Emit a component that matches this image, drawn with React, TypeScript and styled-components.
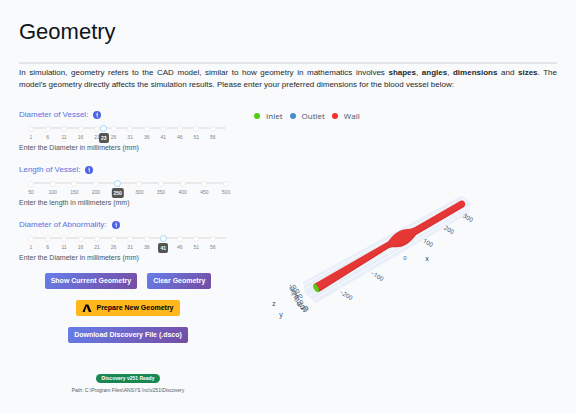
import React, { useState } from "react";
import styled, { createGlobalStyle } from "styled-components";

const GlobalStyle = createGlobalStyle`
  * { box-sizing: border-box; }
  body {
    margin: 0;
    background: #f8fafc;
    color: #212529;
    font-family: "Liberation Sans", Arial, sans-serif;
    font-size: 8px;
  }
`;

const Page = styled.main`
  padding: 18px 19px;
`;

const Title = styled.h1`
  margin: 0 0 16px;
  font-size: 22px;
  line-height: 28px;
  font-weight: 400;
  color: #111418;
`;

const Divider = styled.hr`
  height: 2px;
  margin: 0 0 3px;
  border: 0;
  background: #e1e4e8;
`;

const Intro = styled.p`
  margin: 0 0 18px;
  line-height: 12px;
  text-align: justify;
  color: #24292e;
`;

const Columns = styled.div`
  display: grid;
  grid-template-columns: minmax(218px, 2fr) 3fr;
`;

const Fields = styled.div`
  display: flex;
  flex-direction: column;
  gap: 11px;
`;

const Field = styled.div`
  display: flex;
  flex-direction: column;
`;

const LabelRow = styled.div`
  display: flex;
  align-items: center;
  gap: 5px;
  height: 12px;
`;

const FieldLabel = styled.label`
  line-height: 12px;
  color: #5b6fe3;
`;

const InfoIcon = styled.svg`
  width: 8px;
  height: 8px;
`;

const SliderBox = styled.div`
  position: relative;
  height: 22px;
  margin: 0 11px 0 12px;
`;

const Rail = styled.div`
  position: absolute;
  top: 6px;
  left: 0;
  right: 0;
  height: 2px;
  border-radius: 1px;
  background: #e9e9e9;
`;

const Mark = styled.div`
  position: absolute;
  top: 5px;
  display: flex;
  flex-direction: column;
  align-items: center;
  gap: 1px;
  width: 20px;
  margin-left: -10px;
  font-size: 5px;
  line-height: 8px;
  color: #808489;
  &::before {
    content: "";
    width: 4px;
    height: 4px;
    border: 1px solid #eeeeee;
    border-radius: 50%;
    background: #ffffff;
  }
`;

const Range = styled.input`
  position: absolute;
  top: 3px;
  left: -4px;
  width: calc(100% + 8px);
  height: 8px;
  margin: 0;
  appearance: none;
  background: transparent;
  cursor: pointer;
  &::-webkit-slider-thumb {
    appearance: none;
    width: 7px;
    height: 7px;
    border: 1px solid #a3d7fa;
    border-radius: 50%;
    background: #ffffff;
  }
`;

const Bubble = styled.output`
  position: absolute;
  top: 12px;
  min-width: 10px;
  padding: 0 2px;
  border-radius: 2px;
  transform: translateX(-50%);
  background: #555555;
  color: #ffffff;
  font-size: 5px;
  font-weight: 700;
  line-height: 10px;
  text-align: center;
`;

const Help = styled.div`
  font-size: 7px;
  line-height: 10px;
  color: #50555a;
`;

const Actions = styled.div`
  display: flex;
  flex-direction: column;
  align-items: center;
  gap: 11px;
  margin-top: 10px;
`;

const ActionRow = styled.div`
  display: flex;
  gap: 10px;
`;

const Button = styled.button<{ $tone?: "amber" }>`
  display: inline-flex;
  align-items: center;
  gap: 4px;
  height: 16px;
  padding: 0 6px;
  border: 0;
  border-radius: 2px;
  background: ${(p) => (p.$tone === "amber" ? "#ffb71b" : "linear-gradient(135deg, #667eea 0%, #764ba2 100%)")};
  color: ${(p) => (p.$tone === "amber" ? "#000000" : "#ffffff")};
  font: 700 7px/16px "Liberation Sans", Arial, sans-serif;
  white-space: nowrap;
  cursor: pointer;
`;

const LogoIcon = styled.svg`
  width: 10px;
  height: 8px;
`;

const Status = styled.div`
  display: flex;
  flex-direction: column;
  align-items: center;
  gap: 3px;
  margin-top: 31px;
`;

const Badge = styled.span`
  padding: 0 6px;
  border-radius: 5px;
  background: #198754;
  color: #ffffff;
  font-size: 5px;
  font-weight: 700;
  line-height: 9px;
`;

const Path = styled.div`
  font-size: 5px;
  line-height: 8px;
  color: #555a5f;
`;

const Viewer = styled.section`
  display: flex;
  flex-direction: column;
`;

const Legend = styled.ul`
  display: flex;
  gap: 7px;
  margin: 0;
  padding: 1px 0 0 17px;
  list-style: none;
`;

const LegendItem = styled.li<{ $color: string }>`
  display: flex;
  align-items: center;
  gap: 6px;
  font: 8px/12px "Open Sans", sans-serif;
  color: #42536f;
  &::before {
    content: "";
    width: 6px;
    height: 6px;
    border-radius: 50%;
    background: ${(p) => p.$color};
  }
`;

const Plot = styled.svg`
  width: 100%;
  font-family: "Open Sans", sans-serif;
  fill: #2a3f5f;
`;

const TickText = styled.text`
  font-size: 6px;
  text-anchor: middle;
`;

const AxisText = styled.text`
  font-size: 7px;
  text-anchor: middle;
`;

type SliderProps = {
  id: string;
  label: string;
  help: string;
  min: number;
  max: number;
  step: number;
  initial: number;
};

function SliderField({ id, label, help, min, max, step, initial }: SliderProps) {
  const [value, setValue] = useState(initial);
  const place = (v: number) => `${((v - min) / (max - min)) * 100}%`;
  const marks: number[] = [];
  for (let v = min; v <= max; v += step) marks.push(v);
  return (
    <Field>
      <LabelRow>
        <FieldLabel htmlFor={id}>{label}</FieldLabel>
        <InfoIcon viewBox="0 0 16 16" aria-hidden="true">
          <circle cx="8" cy="8" r="8" fill="#4c63e6" />
          <circle cx="8.4" cy="4.4" r="1.3" fill="#fff" />
          <path d="M6.4 7h2.8l-1 5h1.4" fill="none" stroke="#fff" strokeWidth="1.5" />
        </InfoIcon>
      </LabelRow>
      <SliderBox>
        <Rail />
        {marks.map((v) => (
          <Mark key={v} style={{ left: place(v) }}>{v}</Mark>
        ))}
        <Range
          id={id}
          type="range"
          min={min}
          max={max}
          value={value}
          onChange={(e) => setValue(Number(e.target.value))}
        />
        <Bubble htmlFor={id} style={{ left: place(value) }}>{value}</Bubble>
      </SliderBox>
      <Help>{help}</Help>
    </Field>
  );
}

const xTicks = [
  { text: "300", x: 468, y: 221 },
  { text: "200", x: 449, y: 233 },
  { text: "100", x: 428, y: 246 },
  { text: "−100", x: 377, y: 279 },
  { text: "−200", x: 346, y: 298 },
];

const sideTicks = [
  { text: "−20", x: 292, y: 292, turn: 65 },
  { text: "20", x: 293, y: 291, turn: -35 },
  { text: "−10", x: 295, y: 297, turn: 62 },
  { text: "−20", x: 295, y: 296, turn: -35 },
  { text: "0", x: 296, y: 300, turn: 60 },
  { text: "−10", x: 298, y: 301, turn: -35 },
  { text: "10", x: 298, y: 305, turn: 55 },
  { text: "10", x: 300, y: 306, turn: -35 },
  { text: "20", x: 301, y: 309, turn: 50 },
  { text: "−20", x: 303, y: 311, turn: 30 },
  { text: "20", x: 305, y: 312, turn: -35 },
];

function VesselPlot() {
  return (
    <Plot viewBox="237 123 320 216" role="img" aria-label="Blood vessel geometry">
      <polygon points="303,283 461,197 471,203 469,214 316,304 305,294" fill="#e9eff8" />
      <g fill="none" stroke="#f8fafd" strokeWidth="1">
        <path d="M303 286L464 200M305 290L466 203M309 297L469 208M313 301L469 211" />
        <path d="M327 270l15 19M352 257l15 18M379 243l15 17M405 229l14 16M432 214l13 15M449 206l11 13" />
      </g>
      <path
        d="M314 285L388 242.500C392 237 398 231.500 404 230.500C408 229.500 412 230 415 228L460 202C464 200 467 205 464 208L416 236C411 243 405 247.500 399 248C395 248.500 392 247.500 389 249L319 293Z"
        fill="#e53735"
      />
      <path d="M319 292L389 248C392 246.500 395 247.500 399 247C405 246 411 241 415 235.500L464 207" fill="none" stroke="#d83230" />
      <ellipse cx="316" cy="289" rx="2.2" ry="4.6" transform="rotate(-27 316 289)" fill="#52cc0c" />
      {xTicks.map((t) => (
        <TickText key={t.text} x={t.x} y={t.y} transform={`rotate(31 ${t.x} ${t.y - 2})`}>{t.text}</TickText>
      ))}
      <TickText x="405" y="261">0</TickText>
      {sideTicks.map((t, i) => (
        <TickText key={i} x={t.x} y={t.y} transform={`rotate(${t.turn} ${t.x} ${t.y - 2})`}>{t.text}</TickText>
      ))}
      <AxisText x="427" y="262">x</AxisText>
      <AxisText x="281" y="318">y</AxisText>
      <AxisText x="274" y="307">z</AxisText>
    </Plot>
  );
}

export default function App() {
  return (
    <>
      <GlobalStyle />
      <Page>
        <Title>Geometry</Title>
        <Divider />
        <Intro>
          In simulation, geometry refers to the CAD model, similar to how geometry in mathematics involves{" "}
          <strong>shapes</strong>, <strong>angles</strong>, <strong>dimensions</strong> and <strong>sizes</strong>. The
          model's geometry directly affects the simulation results. Please enter your preferred dimensions for the
          blood vessel below:
        </Intro>
        <Columns>
          <section>
            <Fields>
              <SliderField id="vessel-diameter" label="Diameter of Vessel:" help="Enter the Diameter in millimeters (mm)" min={1} max={60} step={5} initial={23} />
              <SliderField id="vessel-length" label="Length of Vessel:" help="Enter the length in millimeters (mm)" min={50} max={500} step={50} initial={250} />
              <SliderField id="abnormality-diameter" label="Diameter of Abnormality:" help="Enter the Diameter in millimeters (mm)" min={1} max={60} step={5} initial={41} />
            </Fields>
            <Actions>
              <ActionRow>
                <Button type="button">Show Current Geometry</Button>
                <Button type="button">Clear Geometry</Button>
              </ActionRow>
              <Button type="button" $tone="amber">
                <LogoIcon viewBox="0 0 10 8" aria-hidden="true">
                  <path d="M0.500 8L3.600 0.500H6.300L9.500 8H6.900L4.500 2.300L2.600 8Z" />
                </LogoIcon>
                Prepare New Geometry
              </Button>
              <Button type="button">Download Discovery File (.dsco)</Button>
            </Actions>
            <Status>
              <Badge>Discovery v251 Ready</Badge>
              <Path>Path: C:\Program Files\ANSYS Inc\v251\Discovery</Path>
            </Status>
          </section>
          <Viewer>
            <Legend>
              <LegendItem $color="#52cc0c">Inlet</LegendItem>
              <LegendItem $color="#4790c8">Outlet</LegendItem>
              <LegendItem $color="#ed3131">Wall</LegendItem>
            </Legend>
            <VesselPlot />
          </Viewer>
        </Columns>
      </Page>
    </>
  );
}
